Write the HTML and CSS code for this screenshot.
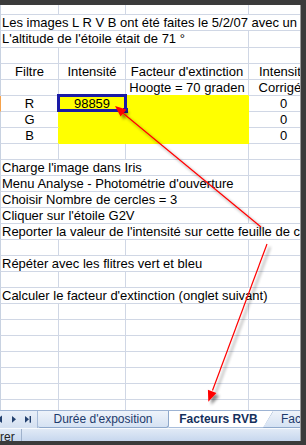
FILE: index.html
```html
<!DOCTYPE html>
<html lang="fr">
<head>
    <meta charset="UTF-8">
    <meta name="viewport" content="width=device-width, initial-scale=1.0">
    <title>Facteurs RVB</title>
    <link rel="stylesheet" href="styles.css">
</head>
<body>
    <div class="shot">
        <div class="window">
            <div class="sheet">
                <div class="row top"><div class="c"></div><div class="c"></div><div class="c"></div><div class="c"></div></div>
                <div class="row"><div class="c s4">Les images L R V B ont été faites le 5/2/07 avec un</div></div>
                <div class="row tall"><div class="c s3">L'altitude de l'étoile était de 71 °</div><div class="c"></div></div>
                <div class="row"><div class="c"></div><div class="c"></div><div class="c"></div><div class="c"></div></div>
                <div class="row"><div class="c m">Filtre</div><div class="c m">Intensité</div><div class="c m">Facteur d'extinction</div><div class="c m">Intensité</div></div>
                <div class="row"><div class="c"></div><div class="c yt"></div><div class="c m yt">Hoogte = 70 graden</div><div class="c m">Corrigée</div></div>
                <div class="row"><div class="c m ya hl">R</div><div class="c m y sel">98859</div><div class="c y"></div><div class="c m">0</div></div>
                <div class="row"><div class="c m ya">G</div><div class="c y"></div><div class="c y"></div><div class="c m">0</div></div>
                <div class="row"><div class="c m ya">B</div><div class="c y"></div><div class="c y"></div><div class="c m">0</div></div>
                <div class="row"><div class="c"></div><div class="c"></div><div class="c"></div><div class="c"></div></div>
                <div class="row"><div class="c s3">Charge l'image dans Iris</div><div class="c"></div></div>
                <div class="row"><div class="c s3">Menu Analyse - Photométrie d'ouverture</div><div class="c"></div></div>
                <div class="row"><div class="c s3">Choisir Nombre de cercles = 3</div><div class="c"></div></div>
                <div class="row"><div class="c s3">Cliquer sur l'étoile G2V</div><div class="c"></div></div>
                <div class="row"><div class="c s4">Reporter la valeur de l'intensité sur cette feuille de calcul</div></div>
                <div class="row"><div class="c"></div><div class="c"></div><div class="c"></div><div class="c"></div></div>
                <div class="row"><div class="c s3">Répéter avec les flitres vert et bleu</div><div class="c"></div></div>
                <div class="row"><div class="c"></div><div class="c"></div><div class="c"></div><div class="c"></div></div>
                <div class="row"><div class="c s4">Calculer le facteur d'extinction (onglet suivant)</div></div>
                <div class="row"><div class="c"></div><div class="c"></div><div class="c"></div><div class="c"></div></div>
                <div class="row"><div class="c"></div><div class="c"></div><div class="c"></div><div class="c"></div></div>
                <div class="row"><div class="c"></div><div class="c"></div><div class="c"></div><div class="c"></div></div>
                <div class="row"><div class="c"></div><div class="c"></div><div class="c"></div><div class="c"></div></div>
                <div class="row"><div class="c"></div><div class="c"></div><div class="c"></div><div class="c"></div></div>
                <div class="row"><div class="c"></div><div class="c"></div><div class="c"></div><div class="c"></div></div>
                <div class="row"><div class="c"></div><div class="c"></div><div class="c"></div><div class="c"></div></div>
            </div>
            <div class="tabs">
                <div class="nav">
                    <svg width="37" height="17" viewBox="0 0 37 17">
                        <polygon points="-3,8.3 2,4.5 2,12" fill="#23406e"/>
                        <polygon points="12,5 16,8.3 12,11.7" fill="#23406e"/>
                        <polygon points="25,5 29,8.3 25,11.7" fill="#23406e"/>
                        <rect x="29.6" y="5" width="1.4" height="6.7" fill="#23406e"/>
                    </svg>
                </div>
                <div class="tab t1">Durée d'exposition</div>
                <div class="tab t2">Facteurs RVB</div>
                <div class="tab t3">Facteur d'extinction</div>
            </div>
            <div class="status"><span class="mode">rer</span></div>
        </div>
        <svg class="arrows" width="306" height="445" viewBox="0 0 306 445">
            <defs>
                <filter id="shade" filterUnits="userSpaceOnUse" x="0" y="0" width="306" height="445">
                    <feDropShadow dx="3" dy="3" stdDeviation="1.6" flood-color="#000" flood-opacity="0.45"/>
                </filter>
            </defs>
            <g filter="url(#shade)">
                <line x1="261" y1="227" x2="121" y2="111.5" stroke="#ff0000" stroke-width="1.2"/>
                <polygon points="115,106 126.4,109.6 120.6,116.5" fill="#ff0000"/>
                <line x1="267" y1="244" x2="212.5" y2="390.5" stroke="#ff0000" stroke-width="1.2"/>
                <polygon points="208.3,401.7 216.4,393 207.9,389.8" fill="#ff0000"/>
            </g>
        </svg>
    </div>
</body>
</html>
```

FILE: styles.css
```css
body { margin: 0; background: #3b3b3b; font-family: "Liberation Sans", Arial, sans-serif; }
.shot {
    position: relative;
    width: 306px;
    height: 445px;
    padding-top: 5px;
    box-sizing: border-box;
    background: #3b3b3b;
    overflow: hidden;
}
.window {
    width: 301px;
    height: 436px;
    background: #fff;
    border-right: 1px solid #9a9a9a;
    box-sizing: border-box;
    display: flex;
    flex-direction: column;
    overflow: hidden;
}

/* grille */
.sheet { flex: 1; overflow: hidden; }
.row { display: grid; grid-template-columns: 59px 67px 123px 70px; height: 16px; }
.row.top { height: 10px; }
.row.tall { height: 17px; }
.c {
    box-sizing: border-box;
    border-right: 1px solid #d0d7e5;
    border-bottom: 1px solid #d0d7e5;
    padding-left: 1px;
    font-size: 13px;
    line-height: 15px;
    white-space: nowrap;
    color: #000;
    min-width: 0;
}
.c:first-child { border-left: 1px solid #c8d2e1; }
.m { text-align: center; padding-left: 0; }
.s3 { grid-column: span 3; }
.s4 { grid-column: span 4; }
.y { background: #ffff00; border-color: #ffff00; }
.yt { border-bottom-color: #ffff00; }
.ya { border-right-color: #ffff00; }
.c.hl { border-left-color: #f5a24c; }
.sel { position: relative; }
.sel::before {
    content: "";
    position: absolute;
    left: -2px;
    top: -2px;
    right: -2px;
    bottom: -1px;
    border: 3px solid #1a1aa6;
}
.sel::after {
    content: "";
    position: absolute;
    right: -3px;
    bottom: -2px;
    width: 5px;
    height: 5px;
    background: #1a1aa6;
}

/* onglets */
.tabs {
    flex: none;
    height: 18px;
    display: flex;
    background: linear-gradient(#e8eff9, #d4e0f1);
    border-top: 1px solid #9db3d3;
    box-sizing: border-box;
    font-size: 12px;
    color: #1d3a6b;
}
.nav { flex: none; width: 37px; border-right: 1px solid #a7bbd8; }
.nav svg { display: block; }
.tab {
    flex: none;
    height: 17px;
    line-height: 17px;
    box-sizing: border-box;
    text-align: center;
    white-space: nowrap;
    overflow: hidden;
    position: relative;
}
.t1 {
    width: 131px;
    background: linear-gradient(#eef3fa, #d5e2f3);
    border-right: 1px solid #8ea8cb;
    border-bottom: 1px solid #8ea8cb;
    border-bottom-left-radius: 2px;
    border-bottom-right-radius: 3px;
}
.t2 {
    width: 104px;
    padding-right: 5px;
    background: #fff;
    font-weight: bold;
    color: #15305c;
    border-bottom: 1px solid #a9bedb;
}
.t3 {
    flex: 1;
    margin-left: -10px;
    padding-left: 18px;
    text-align: left;
    clip-path: polygon(10px 0, 100% 0, 100% 100%, 0 100%);
    background:
        linear-gradient(to bottom right, transparent calc(50% - 0.8px), #8ea8cb 50%, transparent calc(50% + 0.8px)) left top / 10px 16px no-repeat,
        linear-gradient(#eef3fa, #d5e2f3);
    border-bottom: 1px solid #8ea8cb;
}

/* barre d'état */
.status {
    flex: none;
    height: 13px;
    display: flex;
    background: linear-gradient(#e1eaf6, #c7d7ee);
    border-top: 1px solid #f7fafd;
    box-sizing: border-box;
    overflow: hidden;
    font-size: 12px;
    color: #222;
}
.mode { width: 21px; padding-top: 2px; line-height: 12px; border-right: 1px solid #9fb2cc; }

.arrows { position: absolute; left: 0; top: 0; pointer-events: none; }
```
